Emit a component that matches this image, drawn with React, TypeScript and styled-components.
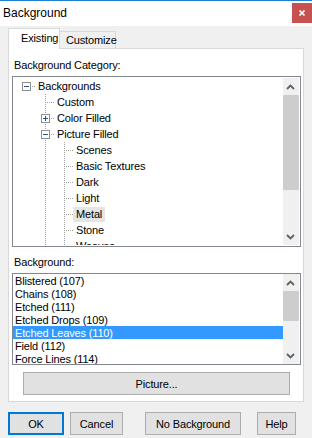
import React from "react";
import styled, { createGlobalStyle } from "styled-components";

const GlobalStyle = createGlobalStyle`
  html, body {
    margin: 0;
    width: 312px;
    height: 438px;
    overflow: hidden;
    background: #f0f0f0;
  }
  * { box-sizing: border-box; }
  body {
    font-family: "Liberation Sans", Arial, sans-serif;
    font-size: 11px;
    letter-spacing: -0.15px;
    color: #000;
  }
`;

const categories: { label: string; depth: number; guides: GuideKind[]; hover?: boolean }[] = [
    { label: "Backgrounds", depth: 0, guides: ["minusRoot"] },
    { label: "Custom", depth: 1, guides: ["blank", "tee"] },
    { label: "Color Filled", depth: 1, guides: ["blank", "plus"] },
    { label: "Picture Filled", depth: 1, guides: ["blank", "minus"] },
    { label: "Scenes", depth: 2, guides: ["blank", "line", "tee"] },
    { label: "Basic Textures", depth: 2, guides: ["blank", "line", "tee"] },
    { label: "Dark", depth: 2, guides: ["blank", "line", "tee"] },
    { label: "Light", depth: 2, guides: ["blank", "line", "tee"] },
    { label: "Metal", depth: 2, guides: ["blank", "line", "tee"], hover: true },
    { label: "Stone", depth: 2, guides: ["blank", "line", "tee"] },
    { label: "Weaves", depth: 2, guides: ["blank", "line", "tee"] },
];

const backgrounds = [
    "Blistered (107)",
    "Chains (108)",
    "Etched (111)",
    "Etched Drops (109)",
    "Etched Leaves (110)",
    "Field (112)",
    "Force Lines (114)",
];

type GuideKind = "blank" | "line" | "tee" | "plus" | "minus" | "minusRoot";

const DOT = "#a0a0a0";

const TreeGuide = ({ kind }: { kind: GuideKind }) => {
    const isBox = kind === "plus" || kind === "minus" || kind === "minusRoot";
    return (
        <GuideSvg width="19" height="16" viewBox="0 0 19 16">
            {(kind === "line" || kind === "tee") && (
                <line x1="9.5" y1="0" x2="9.5" y2="16" stroke={DOT} strokeDasharray="1 1" />
            )}
            {kind === "tee" && (
                <line x1="11" y1="8.5" x2="19" y2="8.5" stroke={DOT} strokeDasharray="1 1" />
            )}
            {isBox && kind !== "minusRoot" && (
                <>
                    <line x1="9.5" y1="0" x2="9.5" y2="4" stroke={DOT} strokeDasharray="1 1" />
                    <line x1="9.5" y1="14" x2="9.5" y2="16" stroke={DOT} strokeDasharray="1 1" />
                </>
            )}
            {isBox && (
                <>
                    <line x1="15" y1="8.5" x2="19" y2="8.5" stroke={DOT} strokeDasharray="1 1" />
                    <rect x="5.5" y="4.5" width="8" height="8" fill="#fff" stroke="#8e8f8f" />
                    <line x1="7" y1="8.5" x2="12" y2="8.5" stroke="#2c4e97" />
                    {kind === "plus" && <line x1="9.5" y1="6" x2="9.5" y2="11" stroke="#2c4e97" />}
                </>
            )}
        </GuideSvg>
    );
};

const Chevron = ({ dir }: { dir: "up" | "down" }) => (
    <svg width="16" height="17" viewBox="0 0 16 17">
        <path
            d={dir === "up" ? "M4 11 L7.5 7.5 L11 11" : "M4 7 L7.5 10.5 L11 7"}
            fill="none"
            stroke="#606060"
            strokeWidth="1.8"
        />
    </svg>
);

const ScrollBar = ({ thumbTop, thumbHeight }: { thumbTop: number; thumbHeight: number }) => (
    <Bar>
        <ArrowButton><Chevron dir="up" /></ArrowButton>
        <Track>
            <Thumb $top={thumbTop} $height={thumbHeight} />
        </Track>
        <ArrowButton><Chevron dir="down" /></ArrowButton>
    </Bar>
);

export default function App() {
    return (
        <>
            <GlobalStyle />
            <Window>
                <TitleBar>
                    <Title>Background</Title>
                    <CloseButton>
                        <svg width="8" height="8" viewBox="0 0 8 8">
                            <path d="M1.5 1.5 L6.5 6.5 M6.5 1.5 L1.5 6.5" stroke="#fff" strokeWidth="1.7" />
                        </svg>
                    </CloseButton>
                </TitleBar>
                <Body>
                    <TabStrip>
                        <Tab $active>Existing</Tab>
                        <Tab>Customize</Tab>
                    </TabStrip>
                    <Panel>
                        <SectionLabel $top={10}>Background Category:</SectionLabel>
                        <TreeBox>
                            <TreeRows>
                                {categories.map((c) => (
                                    <TreeRow key={c.label}>
                                        {c.guides.map((g, i) => (
                                            <TreeGuide key={i} kind={g} />
                                        ))}
                                        <TreeLabel $hover={c.hover}>{c.label}</TreeLabel>
                                    </TreeRow>
                                ))}
                            </TreeRows>
                            <ScrollBar thumbTop={0} thumbHeight={95} />
                        </TreeBox>
                        <SectionLabel $top={9}>Background:</SectionLabel>
                        <ListBox>
                            <ListRows>
                                {backgrounds.map((b) => (
                                    <ListRow key={b} $selected={b === "Etched Leaves (110)"}>
                                        {b}
                                    </ListRow>
                                ))}
                            </ListRows>
                            <ScrollBar thumbTop={0} thumbHeight={30} />
                        </ListBox>
                        <PictureButton>Picture...</PictureButton>
                    </Panel>
                    <ButtonRow>
                        <DialogButton $width={56} $gap={0} $default>OK</DialogButton>
                        <DialogButton $width={53} $gap={6}>Cancel</DialogButton>
                        <DialogButton $width={96} $gap={22}>No Background</DialogButton>
                        <DialogButton $width={39} $gap={16}>Help</DialogButton>
                    </ButtonRow>
                </Body>
            </Window>
        </>
    );
}

const Window = styled.div`
    display: flex;
    flex-direction: column;
    width: 312px;
    height: 438px;
    border-top: 1px solid #1e7fd6;
    background: #f0f0f0;
`
const TitleBar = styled.div`
    display: flex;
    justify-content: space-between;
    align-items: flex-start;
    height: 25px;
    padding-left: 3px;
    background: #fff;
`
const Title = styled.span`
    font-size: 12px;
    line-height: 25px;
    letter-spacing: 0;
`
const CloseButton = styled.div`
    display: flex;
    align-items: center;
    justify-content: center;
    width: 20px;
    height: 20px;
    margin-top: 2px;
    background: #c75050;
`
const Body = styled.div`
    display: flex;
    flex-direction: column;
    padding-left: 8px;
`
const TabStrip = styled.div`
    display: flex;
    align-items: flex-end;
    height: 20px;
    margin-top: 2px;
    position: relative;
    z-index: 1;
`
const Tab = styled.div<{ $active?: boolean }>`
    height: ${(p) => (p.$active ? 21 : 17)}px;
    width: ${(p) => (p.$active ? 52 : 57)}px;
    margin-bottom: ${(p) => (p.$active ? -1 : 0)}px;
    margin-left: ${(p) => (p.$active ? 0 : -1)}px;
    padding: ${(p) => (p.$active ? "3px 0 0 12px" : "2px 0 0 6px")};
    border: 1px solid #d9d9d9;
    border-bottom: none;
    background: ${(p) => (p.$active ? "#fff" : "#f0f0f0")};
    line-height: 13px;
    white-space: nowrap;
    position: relative;
    z-index: ${(p) => (p.$active ? 2 : 1)};
`
const Panel = styled.div`
    display: flex;
    flex-direction: column;
    width: 296px;
    height: 354px;
    padding: 0 2px 0 3px;
    border: 1px solid #d9d9d9;
    background: #fff;
`
const SectionLabel = styled.div<{ $top: number }>`
    padding: ${(p) => p.$top}px 0 4px 2px;
    line-height: 13px;
`
const TreeBox = styled.div`
    display: flex;
    height: 171px;
    padding: 1px;
    border: 1px solid #828790;
    overflow: hidden;
`
const TreeRows = styled.div`
    flex: 1;
    padding-left: 3px;
    overflow: hidden;
`
const TreeRow = styled.div`
    display: flex;
    align-items: flex-start;
    height: 16px;
`
const GuideSvg = styled.svg`
    flex: none;
    display: block;
    shape-rendering: crispEdges;
`
const TreeLabel = styled.span<{ $hover?: boolean }>`
    height: 15px;
    margin: 1px 0 0 -1px;
    padding: 0 3px;
    line-height: 14px;
    white-space: nowrap;
    background: ${(p) => (p.$hover ? "#e5e5e5" : "transparent")};
`
const ListBox = styled.div`
    display: flex;
    height: 92px;
    padding-right: 1px;
    border: 1px solid #828790;
    overflow: hidden;
`
const ListRows = styled.div`
    flex: 1;
    overflow: hidden;
`
const ListRow = styled.div<{ $selected?: boolean }>`
    height: 13px;
    padding-left: 2px;
    line-height: 14px;
    white-space: nowrap;
    color: ${(p) => (p.$selected ? "#fff" : "#000")};
    background: ${(p) => (p.$selected ? "#3399ff" : "transparent")};
`
const Bar = styled.div`
    display: flex;
    flex-direction: column;
    flex: none;
    width: 16px;
    background: #f0f0f0;
`
const ArrowButton = styled.div`
    flex: none;
    height: 17px;
    display: flex;
`
const Track = styled.div`
    flex: 1;
`
const Thumb = styled.div<{ $top: number; $height: number }>`
    margin-top: ${(p) => p.$top}px;
    height: ${(p) => p.$height}px;
    background: #cdcdcd;
`
const PictureButton = styled.div`
    display: flex;
    align-items: center;
    justify-content: center;
    width: 267px;
    height: 23px;
    margin: 7px 0 0 11px;
    border: 1px solid #adadad;
    background: #e1e1e1;
`
const ButtonRow = styled.div`
    display: flex;
    height: 23px;
    margin-top: 10px;
`
const DialogButton = styled.div<{ $width: number; $gap: number; $default?: boolean }>`
    display: flex;
    align-items: center;
    justify-content: center;
    width: ${(p) => p.$width}px;
    margin-left: ${(p) => p.$gap}px;
    border: ${(p) => (p.$default ? "2px solid #0078d7" : "1px solid #adadad")};
    background: #e1e1e1;
    white-space: nowrap;
`
